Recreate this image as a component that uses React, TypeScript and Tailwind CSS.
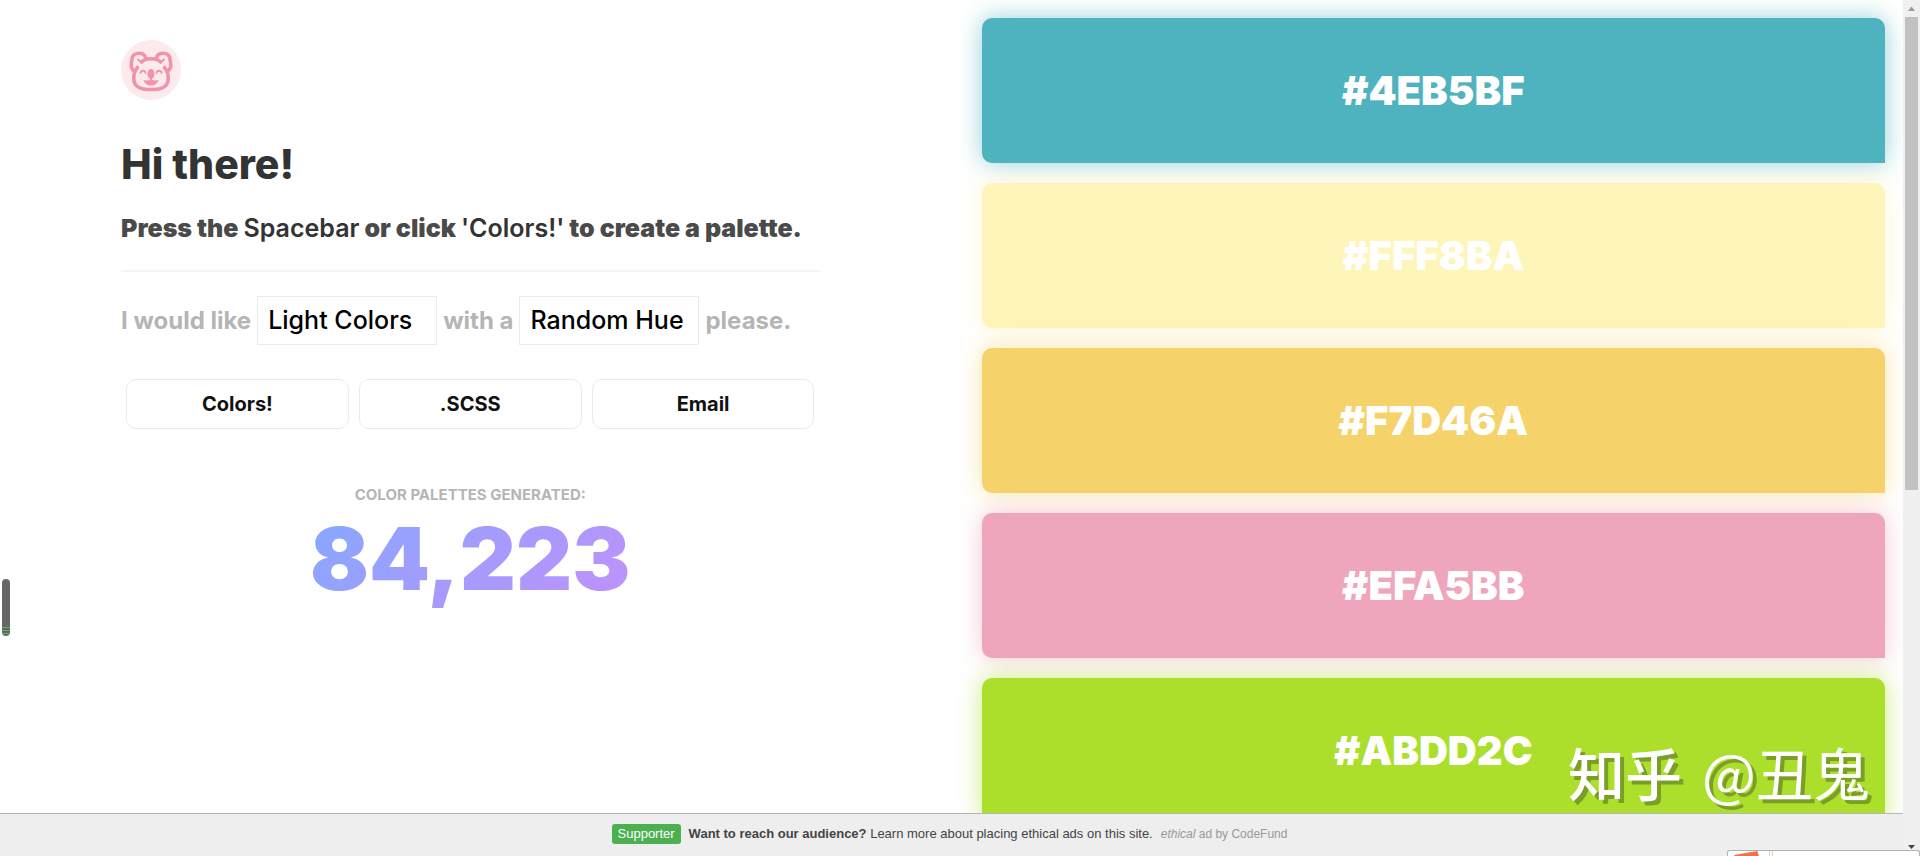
import { useState } from "react";

type Swatch = { hex: string; className: string };

const SWATCHES: Swatch[] = [
  { hex: "#4EB5BF", className: "bg-[#4eb3bf] shadow-[0_0_24px_#4eb3bf99]" },
  { hex: "#FFF8BA", className: "bg-[#fef5ba] shadow-[0_0_24px_#fef5ba99]" },
  { hex: "#F7D46A", className: "bg-[#f5d36a] shadow-[0_0_24px_#f5d36a99]" },
  { hex: "#EFA5BB", className: "bg-[#efa5bb] shadow-[0_0_24px_#efa5bb99]" },
  { hex: "#ABDD2C", className: "bg-[#abdf2c] shadow-[0_0_24px_#abdf2c99]" },
];

const SHADES = ["Light Colors", "Dark Colors", "Bright Colors"];
const HUES = ["Random Hue", "Red Hue", "Blue Hue", "Green Hue"];

function KoalaLogo() {
  return (
    <svg viewBox="0 0 60 60" className="size-15" role="img" aria-label="Koala">
      <circle cx="30" cy="30" r="30" fill="#fdeaec" />
      <g fill="none" stroke="#f093ab" strokeWidth="3.600" strokeLinecap="round" strokeLinejoin="round">
        <path d="M20.500 22c1.500-2 5-3.300 9.500-3.300s8 1.300 9.500 3.300" />
        <path d="M24.500 17.500c-1-3-3.300-4.200-6.500-4.200-5 0-7.500 3-7 7.200-.8 1.300-1 2.700-.5 4-.6 1.500-.3 3 .7 4 .2 1.200.8 2 1.800 2.500" />
        <path d="M35.500 17.500c1-3 3.300-4.200 6.500-4.200 5 0 7.500 3 7 7.200.8 1.300 1 2.700.5 4 .6 1.500.3 3-.7 4-.2 1.200-.8 2-1.800 2.500" />
        <path d="M16.500 27.500c-3 3.500-4 8-3.700 12 .5 6.500 5 10 17.200 10s16.700-3.500 17.200-10c.3-4-.7-8.500-3.700-12" />
        <path d="M17 19.500l3 2.500M43 19.500l-3 2.500" strokeWidth="2" />
        <path d="M19.500 33c.3-3 4.700-3 5 0M35.500 33c.3-3 4.700-3 5 0" strokeWidth="1.800" />
      </g>
      <ellipse cx="30" cy="34" rx="3.500" ry="5" fill="#f093ab" />
      <path d="M22.500 40c2 .6 5 .6 7.500-.6 2.500 1.200 5.500 1.200 7.500.6-1 3.500-4 5.500-7.500 5.500s-6.500-2-7.500-5.500z" fill="#f093ab" />
      <path d="M30 37v4" stroke="#f093ab" strokeWidth="2" />
    </svg>
  );
}

function PhraseSelect({
  label,
  options,
  value,
  onChange,
}: {
  label: string;
  options: string[];
  value: string;
  onChange: (value: string) => void;
}) {
  return (
    <select
      aria-label={label}
      value={value}
      onChange={(e) => onChange(e.target.value)}
      className="h-[49px] w-[180px] appearance-none border border-[#ebebeb] bg-white px-2.5 text-[25px] font-medium text-black outline-none"
    >
      {options.map((o) => (
        <option key={o}>{o}</option>
      ))}
    </select>
  );
}

function Generator() {
  const [shade, setShade] = useState(SHADES[0]);
  const [hue, setHue] = useState(HUES[0]);

  return (
    <section className="pl-[121px] pr-[132px] pt-10">
      <KoalaLogo />
      <h1 className="mt-10 text-[41px] leading-12 font-extrabold whitespace-nowrap text-[#333]">Hi there!</h1>
      <h2 className="mt-6 text-[25px] leading-8 font-black whitespace-nowrap text-[#4a4a4a]">
        Press the <span className="font-semibold text-[#333]">Spacebar</span> or click{" "}
        <span className="font-semibold text-[#333]">'Colors!'</span> to create a palette.
      </h2>
      <hr className="mt-[26px] border-t-2 border-[#f5f5f5]" />

      <div className="mt-6 flex items-center gap-1.5 text-[24px] font-bold whitespace-nowrap text-[#b5b5b5]">
        <span>I would like</span>
        <PhraseSelect label="Shade" options={SHADES} value={shade} onChange={setShade} />
        <span>with a</span>
        <PhraseSelect label="Hue" options={HUES} value={hue} onChange={setHue} />
        <span>please.</span>
      </div>

      <div className="mt-[34px] grid grid-cols-3 gap-2.5 px-[5px]">
        {["Colors!", ".SCSS", "Email"].map((name) => (
          <button
            key={name}
            className="h-[50px] rounded-[10px] border border-[#ebebeb] bg-white text-[20px] font-bold text-[#111]"
          >
            {name}
          </button>
        ))}
      </div>

      <div className="mt-[54px] flex flex-col items-center">
        <p className="text-[15px] leading-6 font-bold text-[#b5b5b5]">COLOR PALETTES GENERATED:</p>
        <p className="bg-linear-[135deg,#85a9ff,#a59bfd_50%,#bf91fb] bg-clip-text text-[87px] leading-[104px] font-black text-transparent">
          84,223
        </p>
      </div>
    </section>
  );
}

function Palette() {
  return (
    <section className="flex flex-col gap-5 pt-[18px] pr-[18px] pl-[30px]">
      {SWATCHES.map(({ hex, className }) => (
        <div
          key={hex}
          className={`flex h-[145px] shrink-0 items-center justify-center rounded-[10px] rounded-br-none ${className}`}
        >
          <span className="text-[40px] font-black text-white">{hex}</span>
        </div>
      ))}
    </section>
  );
}

function AdBar() {
  return (
    <footer className="flex h-[43px] shrink-0 items-start justify-center border-t border-[#b5b5b5] bg-[#eee] pt-2.5 pr-1 font-['Liberation_Sans',Arial,sans-serif] text-[13px] leading-5 whitespace-nowrap text-[#444]">
      <span className="mr-2 rounded-[3px] bg-[#4caf50] px-1.5 text-white">Supporter</span>
      <a href="#advertise">
        <strong>Want to reach our audience?</strong> Learn more about placing ethical ads on this site.
      </a>
      <a href="#codefund" className="ml-2 text-[12px] text-[#999]">
        <em>ethical</em> ad by CodeFund
      </a>
    </footer>
  );
}

function Scrollbar() {
  return (
    <div className="flex w-[17px] shrink-0 flex-col items-center bg-[#f0f0f0]" aria-hidden="true">
      <svg viewBox="0 0 17 17" className="size-[17px] shrink-0">
        <path d="M5 11l3.500-4.500L12 11z" fill="#9b9b9b" />
      </svg>
      <div className="h-[55.3%] w-[13px] bg-[#c1c1c1]" />
      <svg viewBox="0 0 17 17" className="mt-auto size-[17px] shrink-0">
        <path d="M5 6l3.500 4L12 6z" fill="#444" />
      </svg>
    </div>
  );
}

export default function App() {
  return (
    <div className="relative flex h-screen overflow-hidden bg-white font-[Inter,sans-serif]">
      <div className="flex min-w-0 flex-1 flex-col">
        <main className="grid min-h-0 flex-1 grid-cols-2 overflow-hidden">
          <Generator />
          <Palette />
        </main>
        <AdBar />
      </div>
      <Scrollbar />

      {/* Side handle */}
      <div className="absolute top-[579px] left-0.5 flex h-[57px] w-2 flex-col justify-end gap-0.5 rounded-full bg-[#666] pb-0.5">
        <span className="h-px bg-[#58b368]" />
        <span className="h-px bg-[#58b368]" />
        <span className="h-px bg-[#58b368]" />
      </div>

      {/* Watermark */}
      <div className="absolute right-[50px] bottom-[49px] flex items-center gap-5 font-['Noto_Sans_CJK_SC',sans-serif] text-[57px] leading-[72px] whitespace-nowrap text-white [text-shadow:4px_4px_0_#7a9e26]">
        <span className="font-medium">知乎</span>
        <span>@丑鬼</span>
      </div>

      {/* Floating toolbar peeking in from the bottom edge */}
      <div className="absolute right-0 bottom-0 flex h-[6px] w-[193px] overflow-hidden rounded-t-[3px] border border-b-0 border-[#a9b4c0] bg-white">
        <div className="w-[42px] border-r border-[#f3c8b8]">
          <svg viewBox="0 0 42 6" className="h-1.5 w-full">
            <path d="M6 4L30 0l2 6H8z" fill="#f4704a" />
          </svg>
        </div>
        <div className="ml-0.5 border-l border-[#f3c8b8]" />
      </div>
    </div>
  );
}
